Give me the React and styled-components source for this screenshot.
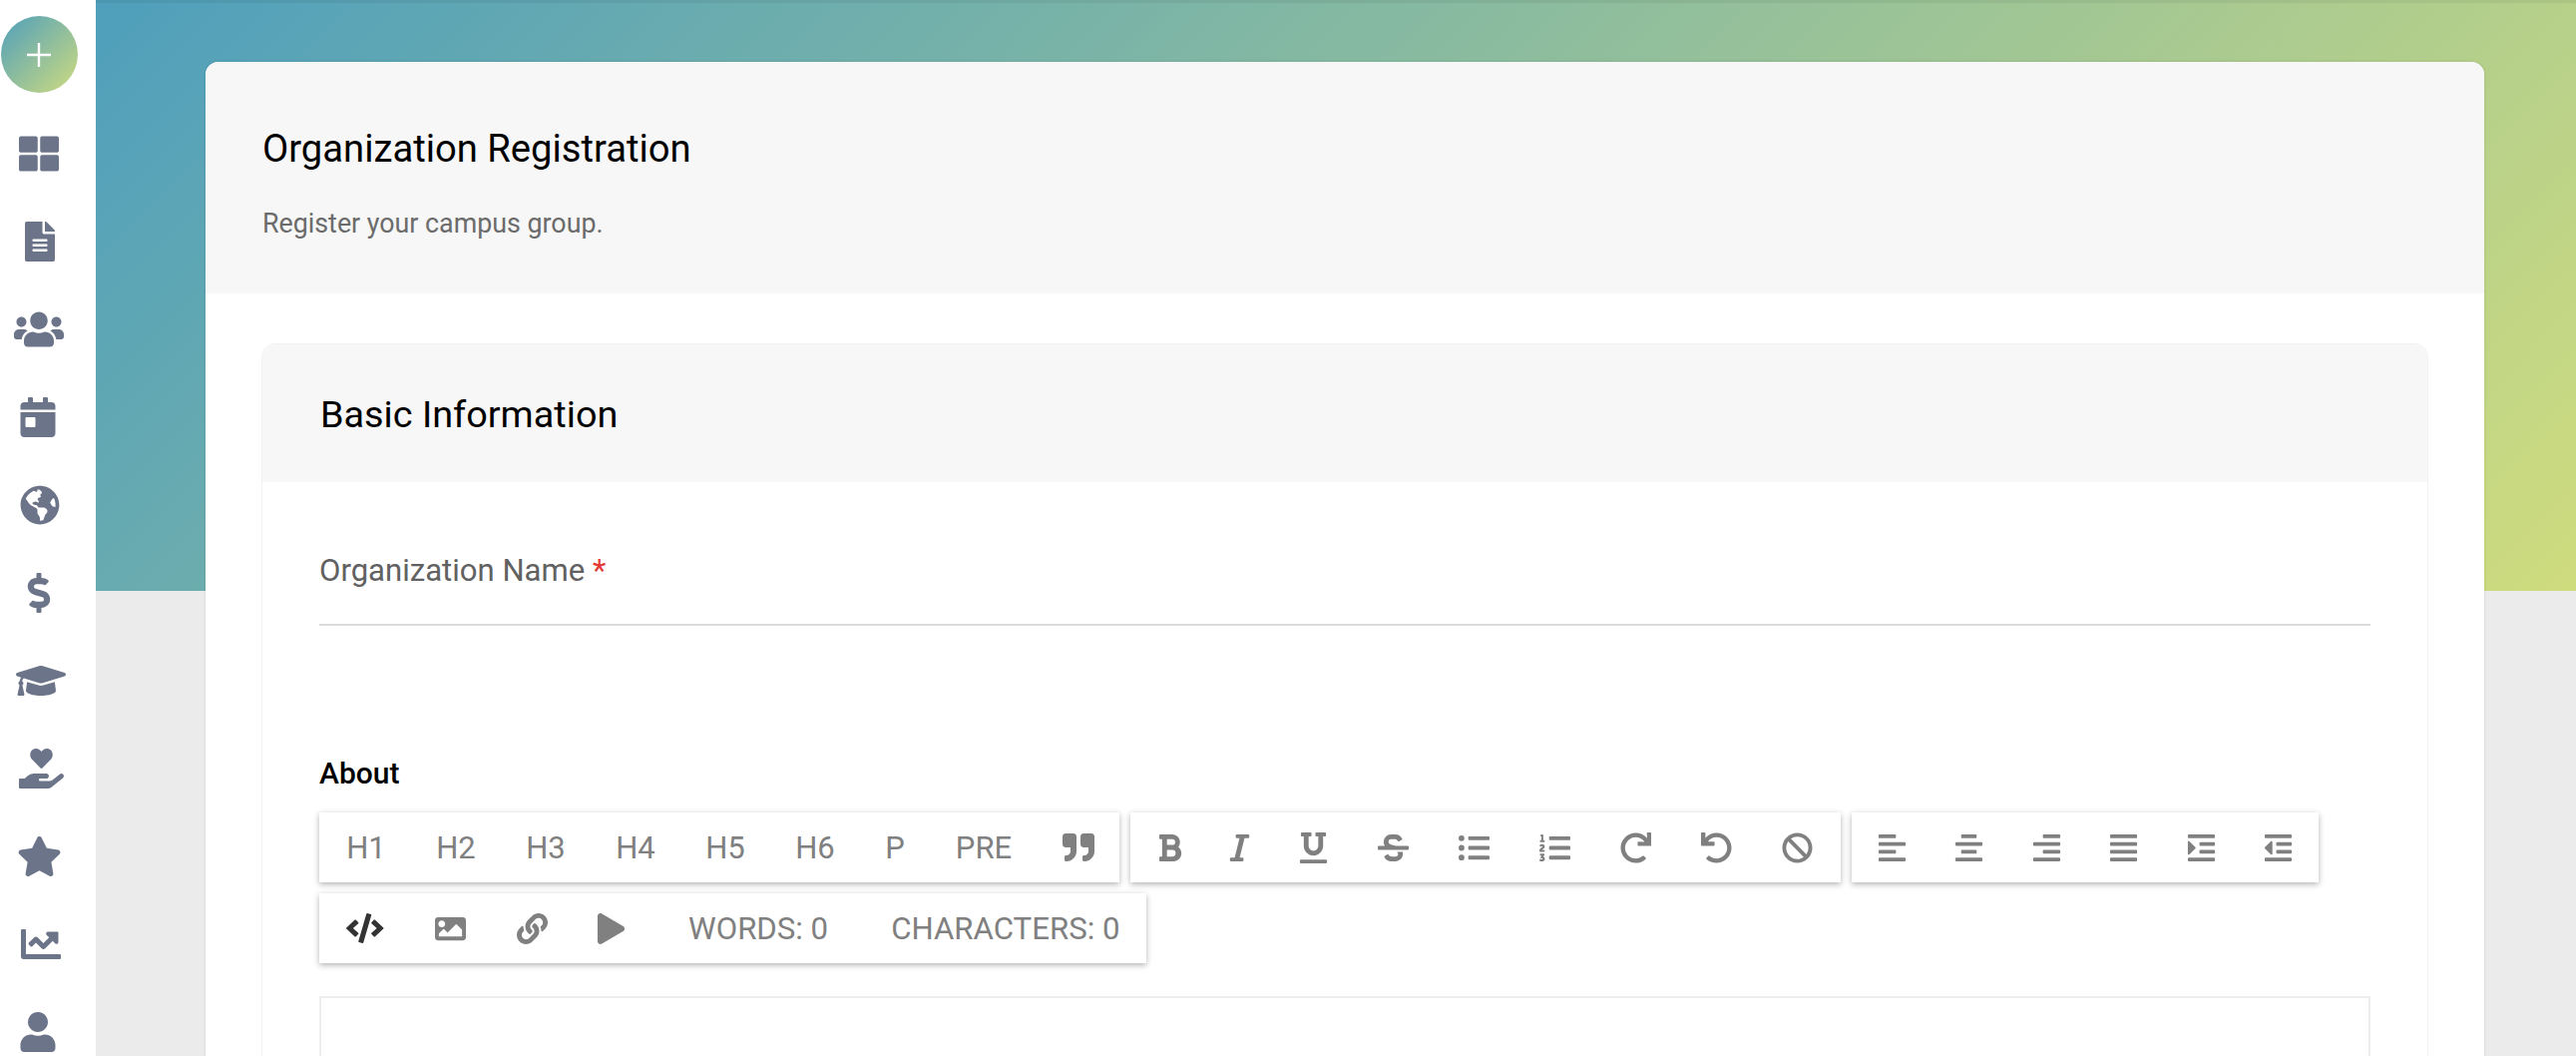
import React from "react";
import styled, { createGlobalStyle } from "styled-components";
import {
  FaThLarge, FaFileAlt, FaUsers, FaCalendarDay, FaGlobeAmericas, FaDollarSign,
  FaGraduationCap, FaHandHoldingHeart, FaStar, FaChartLine, FaUser,
  FaQuoteRight, FaBold, FaItalic, FaUnderline, FaStrikethrough, FaListUl, FaListOl,
  FaRedo, FaUndo, FaBan, FaAlignLeft, FaAlignCenter, FaAlignRight, FaAlignJustify,
  FaIndent, FaOutdent, FaCode, FaImage, FaLink, FaPlay,
} from "react-icons/fa";

const Global = createGlobalStyle`
  html, body {
    margin: 0;
    height: 100%;
    overflow: hidden;
    background: #ebebeb;
    font-family: Roboto, "Liberation Sans", sans-serif;
  }
`;

const Page = styled.div`
  display: flex;
  height: 1058px;
  overflow: hidden;
`;

const Sidebar = styled.nav`
  flex: 0 0 96px;
  box-sizing: border-box;
  padding: 16px 18px 0 0;
  background: #fff;
  display: flex;
  flex-direction: column;
  align-items: center;
`;

const AddButton = styled.button`
  flex: none;
  width: 77px;
  height: 77px;
  border: 0;
  padding: 0;
  border-radius: 50%;
  background: linear-gradient(135deg, #4f9fbc 0%, #cfdc7e 100%);
  display: flex;
  align-items: center;
  justify-content: center;
  margin-bottom: 17px;
`;

const NavItem = styled.a`
  flex: none;
  height: 88px;
  width: 50px;
  display: flex;
  align-items: center;
  justify-content: center;
  color: #6c7489;
  font-size: 40px;
  margin-left: ${(p) => p.$shift || 0}px;

  svg {
    flex: none;
    width: ${(p) => p.$ratio || 1}em;
  }
`;

const Main = styled.main`
  flex: 1;
  min-width: 0;
  padding: 62px 92px 0 110px;
  background:
    linear-gradient(rgba(0, 0, 0, 0.06), rgba(0, 0, 0, 0.06)) top / 100% 3px no-repeat,
    linear-gradient(135deg, #4f9fbc 0%, #cfdc7e 100%) top / 100% 592px no-repeat,
    #ebebeb;
`;

const Card = styled.section`
  background: #fff;
  border-radius: 13px 13px 0 0;
  box-shadow: 0 0 3px rgba(0, 0, 0, 0.12);
  height: 1100px;
`;

const CardHead = styled.header`
  box-sizing: border-box;
  height: 232px;
  padding: 62px 57px 0;
  background: #f7f7f7;
  border-radius: 13px 13px 0 0;
`;

const Title = styled.h1`
  margin: 0;
  font-size: 38.2px;
  line-height: 50px;
  font-weight: 400;
  color: #000;
`;

const Subtitle = styled.p`
  margin: 32px 0 0;
  font-size: 26.8px;
  line-height: 36px;
  color: #6b6b6b;
`;

const CardBody = styled.div`
  padding: 50px 56px 0;
`;

const Panel = styled.section`
  border: 1px solid #f2f2f2;
  border-radius: 13px 13px 0 0;
`;

const PanelHead = styled.header`
  box-sizing: border-box;
  height: 138px;
  padding: 2px 57px 0 58px;
  display: flex;
  align-items: center;
  background: #f7f7f7;
  border-radius: 13px 13px 0 0;
  font-size: 37.8px;
  color: #000;
`;

const PanelBody = styled.div`
  padding: 0 57px;
`;

const Field = styled.div`
  box-sizing: border-box;
  height: 144px;
  padding-top: 66px;
  border-bottom: 2px solid #dcdcdc;
  font-size: 31.1px;
  line-height: 46px;
  color: #616161;
`;

const Required = styled.span`
  color: #e53935;
`;

const EditorLabel = styled.label`
  display: block;
  margin-top: 128px;
  font-size: 30px;
  line-height: 40px;
  font-weight: 500;
  color: #000;
`;

const Toolbar = styled.div`
  display: flex;
  flex-wrap: wrap;
  gap: 11px;
  margin-top: 19px;
`;

const ToolGroup = styled.div`
  display: flex;
  align-items: center;
  height: 70px;
  padding: 0 ${(p) => p.$padRight ?? 0}px 0 ${(p) => p.$padLeft ?? 0}px;
  background: #fff;
  box-shadow: 0 2px 6px rgba(0, 0, 0, 0.3);
`;

const ToolButton = styled.button`
  flex: none;
  width: ${(p) => p.$width}px;
  height: 70px;
  padding: 0;
  border: 0;
  background: none;
  display: flex;
  align-items: center;
  justify-content: center;
  font-family: inherit;
  font-size: ${(p) => p.$size || 31}px;
  color: ${(p) => (p.$dark ? "#333" : "#808080")};

  svg {
    flex: none;
    width: ${(p) => p.$ratio || 1}em;
  }
`;

const Counter = styled.span`
  flex: none;
  font-size: 31.2px;
  color: #808080;
  margin-left: ${(p) => p.$left}px;
`;

const EditorBox = styled.div`
  height: 200px;
  margin-top: 33px;
  border: 2px solid #eeeeee;
`;

const navItems = [
  { Icon: FaThLarge },
  { Icon: FaFileAlt, shift: 2 },
  { Icon: FaUsers, ratio: 1.25 },
  { Icon: FaCalendarDay, shift: -3 },
  { Icon: FaGlobeAmericas, shift: 2 },
  { Icon: FaDollarSign },
  { Icon: FaGraduationCap, ratio: 1.25, shift: 3 },
  { Icon: FaHandHoldingHeart, ratio: 1.125, shift: 4 },
  { Icon: FaStar, ratio: 1.125 },
  { Icon: FaChartLine, shift: 3 },
  { Icon: FaUser, shift: -2 },
];

const headings = [["H1", 90], ["H2", 90], ["H3", 90], ["H4", 90], ["H5", 90], ["H6", 90], ["P", 70], ["PRE", 108]];

const formatTools = [
  [FaBold, 70.2], [FaItalic, 70.6], [FaUnderline, 77.4], [FaStrikethrough, 81.8], [FaListUl, 81],
  [FaListOl, 81], [FaRedo, 81], [FaUndo, 81], [FaBan, 81],
];

const alignTools = [FaAlignLeft, FaAlignCenter, FaAlignRight, FaAlignJustify, FaIndent, FaOutdent];

export default function App() {
  return (
    <Page>
      <Global />
      <Sidebar>
        <AddButton aria-label="Add">
          <svg width="26" height="26" viewBox="0 0 26 26">
            <path d="M13 1v24M1 13h24" stroke="#fff" strokeWidth="2.4" fill="none" />
          </svg>
        </AddButton>
        {navItems.map(({ Icon, shift, ratio }, i) => (
          <NavItem key={i} $shift={shift} $ratio={ratio}>
            <Icon />
          </NavItem>
        ))}
      </Sidebar>
      <Main>
        <Card>
          <CardHead>
            <Title>Organization Registration</Title>
            <Subtitle>Register your campus group.</Subtitle>
          </CardHead>
          <CardBody>
            <Panel>
              <PanelHead>Basic Information</PanelHead>
              <PanelBody>
                <Field>
                  Organization Name <Required>*</Required>
                </Field>
                <EditorLabel>About</EditorLabel>
                <Toolbar>
                  <ToolGroup $padLeft={2}>
                    {headings.map(([text, width]) => (
                      <ToolButton key={text} $width={width}>{text}</ToolButton>
                    ))}
                    <ToolButton $width={81.5} $size={32}><FaQuoteRight /></ToolButton>
                  </ToolGroup>
                  <ToolGroup $padLeft={4.5} $padRight={3}>
                    {formatTools.map(([Icon, width], i) => (
                      <ToolButton key={i} $width={width}><Icon /></ToolButton>
                    ))}
                  </ToolGroup>
                  <ToolGroup $padLeft={1.5} $padRight={1.5}>
                    {alignTools.map((Icon, i) => (
                      <ToolButton key={i} $width={77.5}><Icon /></ToolButton>
                    ))}
                  </ToolGroup>
                  <ToolGroup $padLeft={5} $padRight={27}>
                    <ToolButton $width={82} $size={30} $ratio={1.25} $dark><FaCode /></ToolButton>
                    <ToolButton $width={88}><FaImage /></ToolButton>
                    <ToolButton $width={76}><FaLink /></ToolButton>
                    <ToolButton $width={82}><FaPlay /></ToolButton>
                    <Counter $left={37}>WORDS: 0</Counter>
                    <Counter $left={63}>CHARACTERS: 0</Counter>
                  </ToolGroup>
                </Toolbar>
                <EditorBox />
              </PanelBody>
            </Panel>
          </CardBody>
        </Card>
      </Main>
    </Page>
  );
}
